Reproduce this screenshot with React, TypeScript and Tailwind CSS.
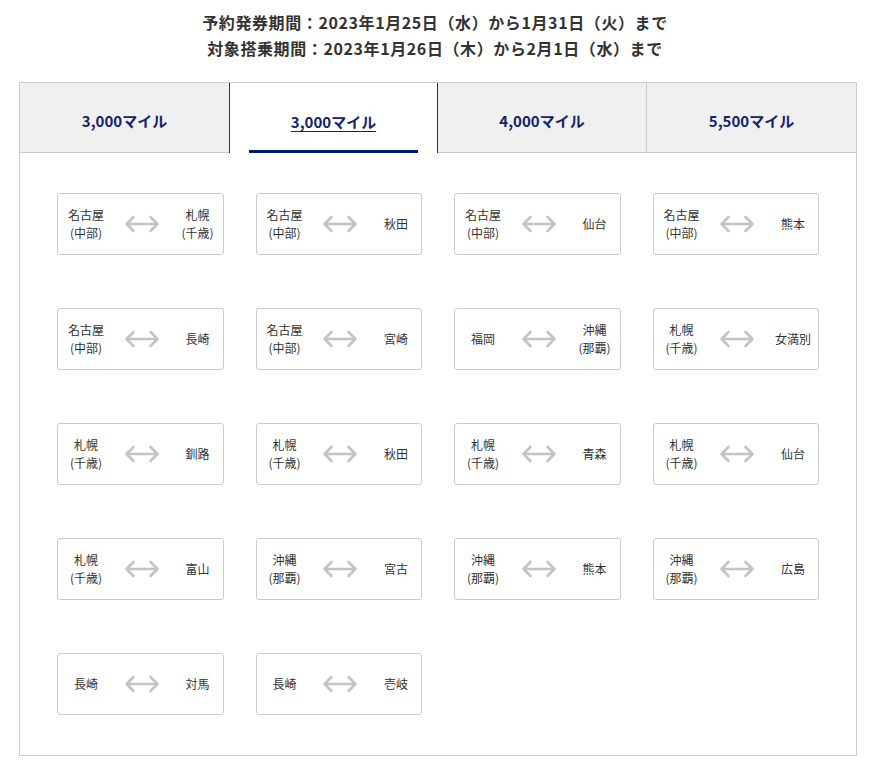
import { useState } from 'react';

type Route = { from: string[]; to: string[] };

const tabs = ['3,000マイル', '3,000マイル', '4,000マイル', '5,500マイル'];

const routes: Route[] = [
  { from: ['名古屋', '(中部)'], to: ['札幌', '(千歳)'] },
  { from: ['名古屋', '(中部)'], to: ['秋田'] },
  { from: ['名古屋', '(中部)'], to: ['仙台'] },
  { from: ['名古屋', '(中部)'], to: ['熊本'] },
  { from: ['名古屋', '(中部)'], to: ['長崎'] },
  { from: ['名古屋', '(中部)'], to: ['宮崎'] },
  { from: ['福岡'], to: ['沖縄', '(那覇)'] },
  { from: ['札幌', '(千歳)'], to: ['女満別'] },
  { from: ['札幌', '(千歳)'], to: ['釧路'] },
  { from: ['札幌', '(千歳)'], to: ['秋田'] },
  { from: ['札幌', '(千歳)'], to: ['青森'] },
  { from: ['札幌', '(千歳)'], to: ['仙台'] },
  { from: ['札幌', '(千歳)'], to: ['富山'] },
  { from: ['沖縄', '(那覇)'], to: ['宮古'] },
  { from: ['沖縄', '(那覇)'], to: ['熊本'] },
  { from: ['沖縄', '(那覇)'], to: ['広島'] },
  { from: ['長崎'], to: ['対馬'] },
  { from: ['長崎'], to: ['壱岐'] },
];

function Arrow() {
  return (
    <svg width="36" height="18" viewBox="0 0 36 18" fill="none" aria-hidden="true">
      <path
        d="M2.5 9H33.5M9.5 2L2.5 9L9.5 16M26.5 2L33.5 9L26.5 16"
        stroke="#c4c4c4"
        strokeWidth="2.6"
        strokeLinecap="round"
        strokeLinejoin="round"
      />
    </svg>
  );
}

function Place({ lines }: { lines: string[] }) {
  return (
    <div className="w-[42px] text-center text-[12px] leading-[18px] text-[#333]">
      {lines.map((line, i) => (
        <div key={i} className="whitespace-nowrap">
          {line}
        </div>
      ))}
    </div>
  );
}

export default function App() {
  const [active, setActive] = useState(1);

  return (
    <div
      className="w-[870px] bg-white pb-[12px]"
      style={{ fontFamily: '"Noto Sans CJK JP", "Noto Sans", sans-serif' }}
    >
      <div className="pt-[9px] text-center text-[16px] font-bold leading-[26px] tracking-[0.6px] text-[#333]">
        <p>予約発券期間：2023年1月25日（水）から1月31日（火）まで</p>
        <p>対象搭乗期間：2023年1月26日（木）から2月1日（水）まで</p>
      </div>

      <div className="mx-[19px] mt-[21px] w-[838px]">
        {/* Tabs */}
        <div className="grid h-[71px] grid-cols-4 border-x border-t border-[#ccc]">
          {tabs.map((tab, i) => {
            const isActive = i === active;
            return (
              <button
                key={i}
                onClick={() => setActive(i)}
                className={`relative flex items-center justify-center pt-[8px] text-[15px] font-bold text-[#14236b] ${
                  isActive
                    ? 'border-x border-[#333] bg-white underline underline-offset-[3px]'
                    : `border-b border-[#ccc] bg-[#f0f0f0] ${i < tabs.length - 1 && i + 1 !== active ? 'border-r' : ''}`
                }`}
              >
                {tab}
                {isActive && (
                  <span className="absolute bottom-0 left-[19px] right-[19px] h-[3px] bg-[#001a66]" />
                )}
              </button>
            );
          })}
        </div>

        {/* Routes */}
        <div className="grid grid-cols-4 gap-x-[32px] gap-y-[53px] border-x border-b border-[#ccc] px-[37px] pt-[40px] pb-[40px]">
          {routes.map((route, i) => (
            <div
              key={i}
              className="flex h-[62px] items-center justify-between rounded-[3px] border border-[#ccc] pl-[7px] pr-[4px]"
            >
              <Place lines={route.from} />
              <Arrow />
              <Place lines={route.to} />
            </div>
          ))}
        </div>
      </div>
    </div>
  );
}
